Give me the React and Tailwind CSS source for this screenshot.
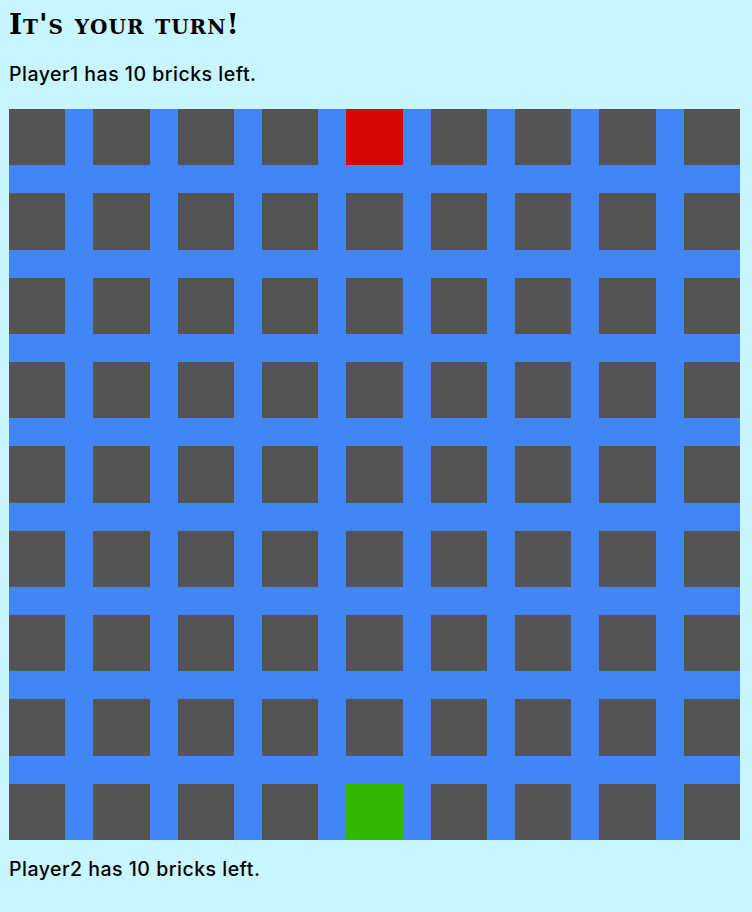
const SIZE = 9;
const RED = [0, 4];
const GREEN = [8, 4];

function Cell({ r, c }) {
    let color = "bg-[#545454]";
    if (r === RED[0] && c === RED[1]) color = "bg-[#d40606]";
    if (r === GREEN[0] && c === GREEN[1]) color = "bg-[#33b700]";
    return <div className={`${color} aspect-square`} />;
}

export default function App() {
    const cells = [];
    for (let r = 0; r < SIZE; r++) {
        for (let c = 0; c < SIZE; c++) {
            cells.push(<Cell key={`${r}-${c}`} r={r} c={c} />);
        }
    }

    return (
        <div className="min-h-[912px] bg-[#c8f5fe] px-[9px] pt-[8px] text-black font-['Inter','Open_Sans',sans-serif]">
            <h1 className="font-['DejaVu_Serif',serif] font-bold text-[28px] leading-[34px] [font-variant:small-caps] tracking-[1px]">
                It's your turn!
            </h1>
            <p className="mt-[20px] text-[19.5px] leading-[24px] tracking-[0.5px] font-[450]">
                Player1 has 10 bricks left.
            </p>
            <div className="mt-[23px] w-[731px] bg-[#4285f4] grid grid-cols-9 gap-[28px]">
                {cells}
            </div>
            <p className="mt-[17px] text-[19.5px] leading-[24px] tracking-[0.5px] font-[450]">
                Player2 has 10 bricks left.
            </p>
        </div>
    );
}
